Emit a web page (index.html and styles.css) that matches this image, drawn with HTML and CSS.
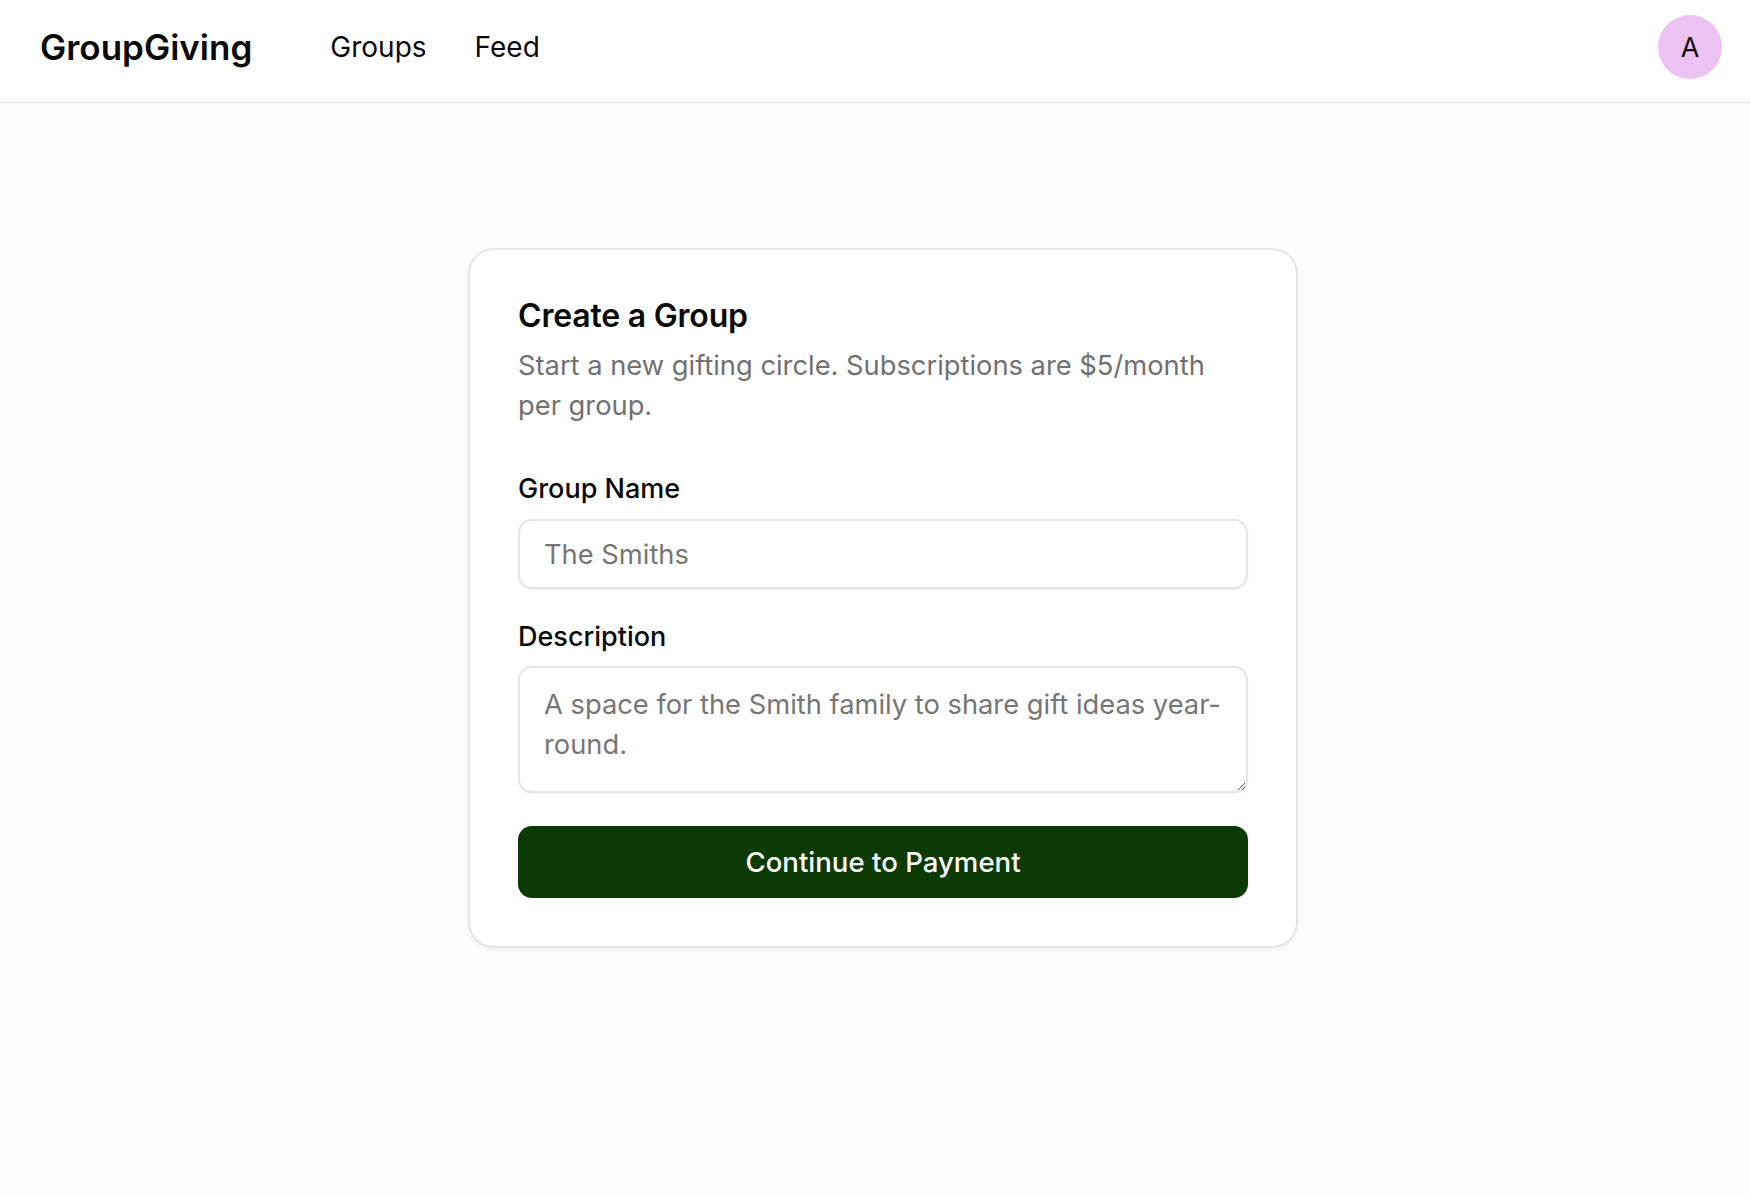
FILE: index.html
```html
<!DOCTYPE html>
<html lang="en">
<head>
<meta charset="utf-8">
<title>GroupGiving – Create a Group</title>
<link rel="stylesheet" href="styles.css">
</head>
<body>
<header class="topbar">
  <div class="brand">GroupGiving</div>
  <nav class="nav">
    <a class="nav-link" href="#">Groups</a>
    <a class="nav-link" href="#">Feed</a>
  </nav>
  <div class="avatar">A</div>
</header>
<main class="main">
  <section class="card">
    <h1 class="card-title">Create a Group</h1>
    <p class="card-sub">Start a new gifting circle. Subscriptions are $5/month per group.</p>
    <form class="form">
      <label class="field-label" for="gname">Group Name</label>
      <input class="field-input" id="gname" type="text" placeholder="The Smiths">
      <label class="field-label field-label-2" for="gdesc">Description</label>
      <textarea class="field-textarea" id="gdesc" rows="2" placeholder="A space for the Smith family to share gift ideas year-round."></textarea>
      <button class="btn-primary" type="button">Continue to Payment</button>
    </form>
  </section>
</main>
</body>
</html>
```

FILE: styles.css
```css
* { box-sizing: border-box; }
html, body { margin: 0; padding: 0; }
body {
  font-family: Inter, "Noto Sans", "Liberation Sans", sans-serif;
  background: #fdfdfd;
  color: #0a0a0a;
  min-height: 1198px;
}
.topbar {
  height: 103px;
  background: #ffffff;
  border-bottom: 1px solid #e4e4e4;
  display: flex;
  align-items: center;
  padding: 0 28px 8px 40px;
}
.brand {
  font-size: 35px;
  font-weight: 600;
  color: #0a0a0a;
}
.nav {
  display: flex;
  gap: 48px;
  margin-left: 78px;
  flex: 1;
}
.nav-link {
  font-size: 28px;
  color: #0a0a0a;
  text-decoration: none;
}
.avatar {
  width: 64px;
  height: 64px;
  border-radius: 50%;
  background: #ebc2f1;
  display: flex;
  align-items: center;
  justify-content: center;
  font-size: 27px;
  color: #0a0a0a;
}
.main {
  display: flex;
  justify-content: center;
  padding: 145px 0 0 16px;
}
.card {
  width: 830px;
  background: #ffffff;
  border: 2px solid #e6e6e6;
  border-radius: 26px;
  box-shadow: 0 2px 4px rgba(0,0,0,0.05);
  padding: 46px 48px 48px;
}
.card-title {
  margin: 0;
  font-size: 32px;
  font-weight: 600;
  line-height: 40px;
  letter-spacing: -0.2px;
}
.card-sub {
  margin: 10px 0 0;
  font-size: 27.3px;
  line-height: 40px;
  color: #717171;
}
.form {
  display: flex;
  flex-direction: column;
  margin-top: 42px;
}
.field-label {
  font-size: 27px;
  font-weight: 500;
  line-height: 42px;
  color: #0a0a0a;
}
.field-label-2 { margin-top: 27px; }
.field-input,
.field-textarea {
  margin-top: 9px;
  width: 100%;
  font-family: inherit;
  font-size: 27.3px;
  line-height: 40px;
  color: #0a0a0a;
  background: #ffffff;
  border: 2px solid #e5e5e5;
  border-radius: 14px;
  box-shadow: 0 1px 2px rgba(0,0,0,0.05);
  padding: 13px 24px;
  outline: none;
}
.field-input { height: 70px; }
.field-textarea {
  margin-top: 8px;
  height: 127px;
  padding: 17px 24px 10px;
  resize: vertical;
}
.field-input::placeholder,
.field-textarea::placeholder { color: #767676; }
.btn-primary {
  margin-top: 33px;
  height: 72px;
  border: none;
  border-radius: 14px;
  background: #0b3a04;
  color: #ffffff;
  font-family: inherit;
  font-size: 27.6px;
  font-weight: 500;
  cursor: pointer;
}
```
